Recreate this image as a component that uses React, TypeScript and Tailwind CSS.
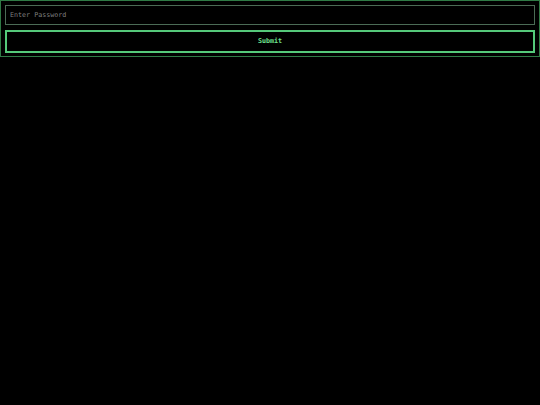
export default function App() {
  return (
    <div className="min-h-[405px] w-[540px] bg-black" style={{ fontFamily: '"DejaVu Sans Mono", monospace' }}>
      <div className="flex flex-col gap-[5px] border border-[#2f7a45] px-[4px] pt-[4px] pb-[3px]">
        <input
          type="password"
          placeholder="Enter Password"
          className="h-[20px] w-full border border-[#4b6b55] bg-black px-[4px] text-[6.7px] text-[#aaa] outline-none placeholder:text-[#7f7f7f]"
        />
        <button className="h-[23px] w-full border-2 border-[#55c97a] bg-black text-[6.7px] font-bold text-[#6fe08f]">
          Submit
        </button>
      </div>
    </div>
  );
}
